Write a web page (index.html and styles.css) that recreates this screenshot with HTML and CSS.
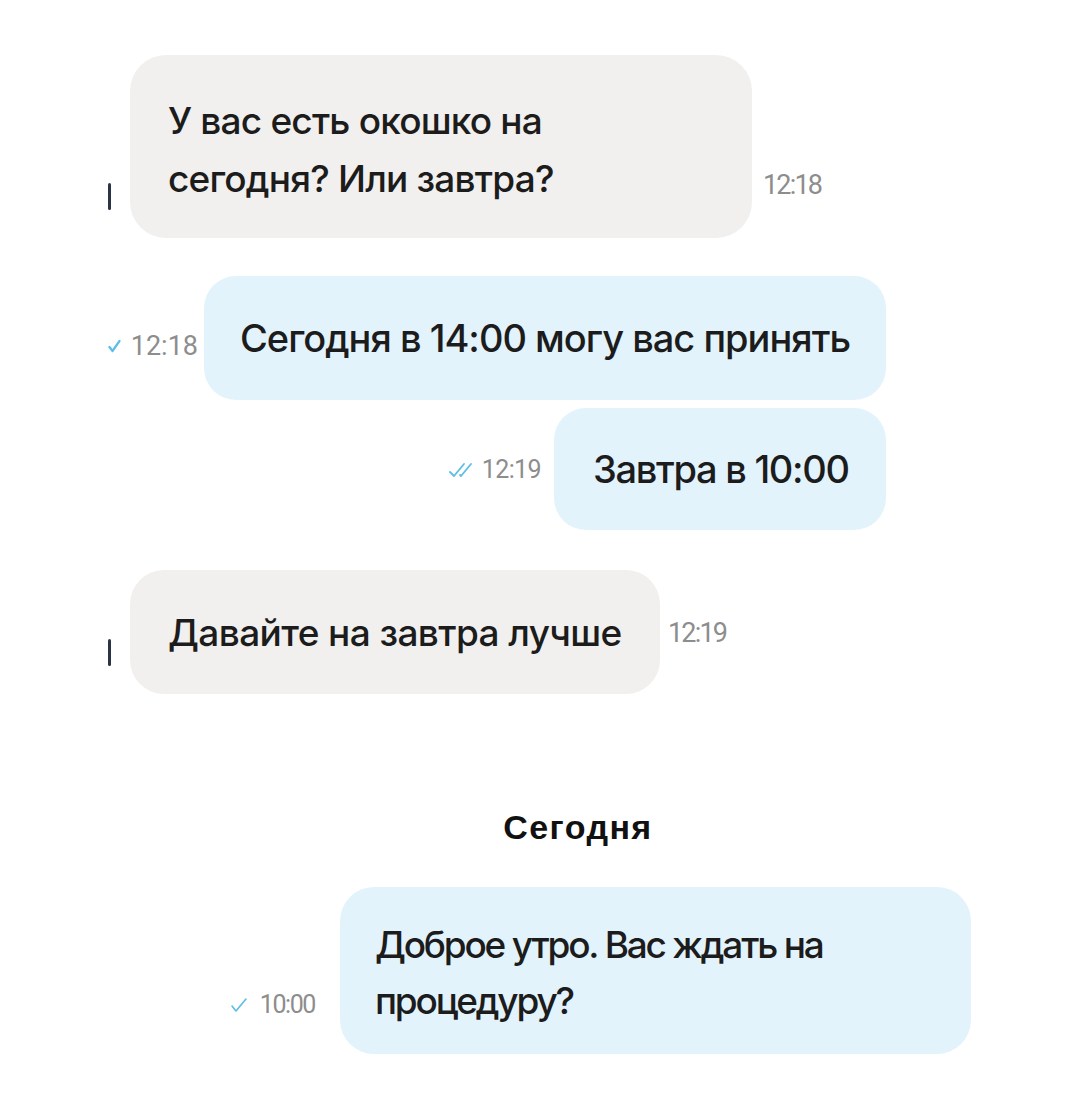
FILE: index.html
```html
<!DOCTYPE html>
<html lang="ru">
<head>
<meta charset="utf-8">
<link rel="stylesheet" href="styles.css">
</head>
<body>
<div class="chat">
  <div class="row in r1">
    <span class="mark"></span>
    <div class="bubble gray b1">У вас есть окошко на<br>сегодня? Или завтра?</div>
    <span class="time t1">12:18</span>
  </div>

  <div class="row out r2">
    <span class="time t2"><svg class="chk" width="13" height="14" viewBox="0 0 13 14"><polyline points="1.5,8 4.5,12 11.5,2" fill="none" stroke="#5cbde6" stroke-width="2.2" stroke-linecap="round" stroke-linejoin="round"/></svg>12:18</span>
    <div class="bubble blue b2">Сегодня в 14:00 могу вас принять</div>
  </div>

  <div class="row out r3">
    <span class="time t3"><svg class="chk2" width="32" height="16" viewBox="0 0 32 16"><polyline points="2,10 6,14 16,2" fill="none" stroke="#5cbde6" stroke-width="1.8" stroke-linecap="round" stroke-linejoin="round"/><polyline points="12,13 13,14 23,2" fill="none" stroke="#5cbde6" stroke-width="1.8" stroke-linecap="round" stroke-linejoin="round"/></svg>12:19</span>
    <div class="bubble blue b3">Завтра в 10:00</div>
  </div>

  <div class="row in r4">
    <span class="mark"></span>
    <div class="bubble gray b4">Давайте на завтра лучше</div>
    <span class="time t4">12:19</span>
  </div>

  <div class="date">Сегодня</div>

  <div class="row out r6">
    <span class="time t6"><svg class="chk" width="18" height="16" viewBox="0 0 18 16"><polyline points="2,9 6,14 16,2" fill="none" stroke="#5cbde6" stroke-width="1.6" stroke-linecap="round" stroke-linejoin="round"/></svg>10:00</span>
    <div class="bubble blue b6">Доброе утро. Вас ждать на<br>процедуру?</div>
  </div>
</div>
</body>
</html>
```

FILE: styles.css
```css
html, body {
  margin: 0;
  padding: 0;
  background: #ffffff;
}

body {
  width: 1080px;
  height: 1119px;
  overflow: hidden;
  font-family: Inter, "Noto Sans", "DejaVu Sans", sans-serif;
  color: #1c1c1c;
}

.chat {
  display: flex;
  flex-direction: column;
  padding-top: 55px;
}

.row {
  display: flex;
  align-items: flex-end;
}

.row.out {
  justify-content: flex-end;
  padding-right: 194px;
}

.mark {
  width: 3px;
  height: 27px;
  margin-left: 108px;
  margin-right: 19px;
  margin-bottom: 28px;
  background: #2a3444;
  border-radius: 2px;
}

.bubble {
  font-size: 37px;
  font-weight: 500;
  letter-spacing: -1.2px;
  white-space: nowrap;
  box-sizing: border-box;
}

.gray { background: #f1f0ee; }
.blue { background: #e3f3fc; }

.b1 {
  width: 622px;
  height: 183px;
  border-radius: 36px;
  padding: 37px 0 0 38px;
  line-height: 58px;
  letter-spacing: -0.8px;
}

.b2 {
  width: 682px;
  height: 124px;
  border-radius: 32px;
  padding: 37px 0 0 36px;
  line-height: 50px;
  font-size: 38px;
  letter-spacing: -1px;
}

.r3 { margin-top: 8px; }

.b3 {
  width: 332px;
  height: 122px;
  border-radius: 32px;
  padding: 36px 0 0 39px;
  line-height: 50px;
  font-size: 38px;
  letter-spacing: -1.3px;
}

.r2 { margin-top: 38px; }
.r4 { margin-top: 40px; }

.b4 {
  width: 530px;
  height: 124px;
  border-radius: 34px;
  padding: 38px 0 0 38px;
  line-height: 50px;
  letter-spacing: -0.6px;
}

.date {
  margin-top: 113px;
  align-self: center;
  margin-left: 76px;
  font-family: "Liberation Sans", Arial, sans-serif;
  font-weight: 700;
  font-size: 34px;
  letter-spacing: 1.4px;
  line-height: 40px;
  color: #111;
}

.row.r6 {
  margin-top: 40px;
  padding-right: 109px;
}

.b6 {
  width: 631px;
  height: 167px;
  border-radius: 34px;
  padding: 30px 0 0 35px;
  line-height: 56px;
  letter-spacing: -2.2px;
}

.time {
  font-family: Roboto, "Liberation Sans", sans-serif;
  font-size: 27px;
  color: #8d8d8d;
  line-height: 30px;
  display: flex;
  align-items: center;
  white-space: nowrap;
}

.t1 {
  margin-left: 11px;
  margin-bottom: 38px;
  letter-spacing: -1.8px;
}

.t4 {
  margin-left: 8px;
  margin-bottom: 46px;
  letter-spacing: -1.8px;
}

.t2 {
  margin-right: 6px;
  margin-bottom: 39px;
}

.t3 {
  margin-right: 13px;
  margin-bottom: 45px;
  font-size: 25px;
  letter-spacing: -0.6px;
}

.t6 {
  margin-right: 25px;
  margin-bottom: 34px;
  font-size: 25px;
  letter-spacing: -1.4px;
}

.chk { margin-right: 10px; }
.chk2 { margin-right: 2px; }
.t6 .chk { margin-right: 12px; }
```
